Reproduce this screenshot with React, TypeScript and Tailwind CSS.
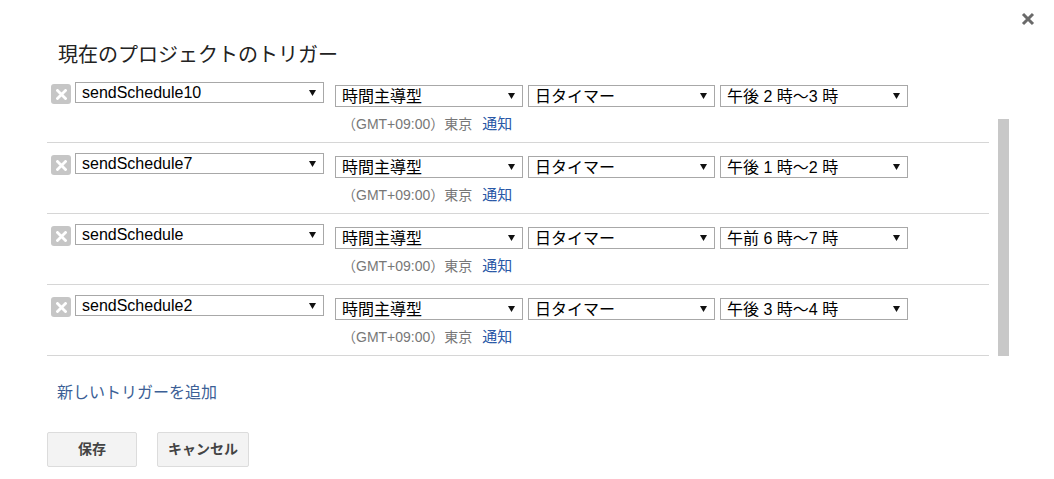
import React from "react";

const rows = [
  { fn: "sendSchedule10", time: "午後 2 時～3 時" },
  { fn: "sendSchedule7", time: "午後 1 時～2 時" },
  { fn: "sendSchedule", time: "午前 6 時～7 時" },
  { fn: "sendSchedule2", time: "午後 3 時～4 時" },
];

const FONT = '"Liberation Sans", "Noto Sans CJK JP", sans-serif';

function Arrow() {
  return (
    <svg width="7" height="6" viewBox="0 0 7 6" className="shrink-0">
      <polygon points="0,0 7,0 3.5,6" fill="#111" />
    </svg>
  );
}

function Select({ label, w, h }: { label: string; w: string; h: string }) {
  return (
    <div
      className={`${w} ${h} flex items-center justify-between border border-[#a8a8a8] bg-white pl-[6px] pr-[7px] text-[16px] leading-[19px] text-black`}
    >
      <span className="whitespace-nowrap">{label}</span>
      <Arrow />
    </div>
  );
}

function DeleteIcon() {
  return (
    <div className="mt-[2px] flex h-[20px] w-[20px] shrink-0 items-center justify-center rounded-[3px] bg-[#c6c6c6]">
      <svg width="11" height="11" viewBox="0 0 11 11">
        <path d="M1.5 1.5 L9.5 9.5 M9.5 1.5 L1.5 9.5" stroke="#fff" strokeWidth="2.8" strokeLinecap="square" />
      </svg>
    </div>
  );
}

export default function App() {
  return (
    <div className="relative h-[479px] w-[1054px] overflow-hidden bg-white" style={{ fontFamily: FONT }}>
      <div className="absolute left-[1021px] top-[12px]">
        <svg width="14" height="14" viewBox="0 0 14 14">
          <path d="M2 2 L12 12 M12 2 L2 12" stroke="#6a6a6a" strokeWidth="3" />
        </svg>
      </div>

      <div className="pl-[47px] pt-[43px]">
        <div className="pl-[11px] text-[20px] leading-[24px] text-[#222]">現在のプロジェクトのトリガー</div>

        <div className="mt-[5px] flex">
          <div className="w-[942px]">
            {rows.map((r) => (
              <div key={r.fn} className="h-[71px] border-b border-[#d6d6d6] pt-[10px]">
                <div className="flex items-start pl-[4px]">
                  <DeleteIcon />
                  <div className="ml-[4px]">
                    <Select label={r.fn} w="w-[249px]" h="h-[21px]" />
                  </div>
                  <div className="ml-[11px] mt-[3px]">
                    <div className="flex gap-[5px]">
                      <Select label="時間主導型" w="w-[188px]" h="h-[22px]" />
                      <Select label="日タイマー" w="w-[187px]" h="h-[22px]" />
                      <Select label={r.time} w="w-[188px]" h="h-[22px]" />
                    </div>
                    <div className="mt-[9px] flex pl-[7px] text-[14px] leading-[16px]">
                      <span className="text-[#777]">（GMT+09:00）東京</span>
                      <span className="ml-[10px] text-[15px] text-[#2a58a6]">通知</span>
                    </div>
                  </div>
                </div>
              </div>
            ))}
          </div>
          <div className="ml-[9px] w-[11px]">
            <div className="mt-[47px] h-[237px] w-[11px] bg-[#c8c8c8]" />
          </div>
        </div>

        <div className="mt-[27px] pl-[10px] text-[16px] leading-[20px] text-[#3c5f96]">新しいトリガーを追加</div>

        <div className="mt-[29px] flex gap-[20px]">
          <button className="h-[35px] w-[90px] rounded-[2px] border border-[#dcdcdc] bg-[#f3f3f3] text-[14px] font-bold text-[#444]">
            保存
          </button>
          <button className="h-[35px] w-[92px] rounded-[2px] border border-[#dcdcdc] bg-[#f3f3f3] text-[14px] font-bold text-[#444]">
            キャンセル
          </button>
        </div>
      </div>
    </div>
  );
}
